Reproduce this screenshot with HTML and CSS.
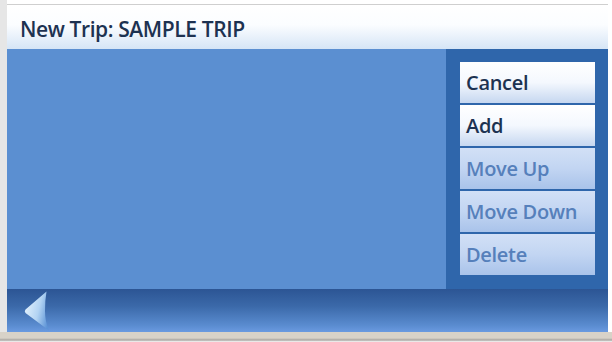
FILE: index.html
```html
<!DOCTYPE html>
<html>
<head>
<meta charset="utf-8">
<link rel="stylesheet" href="styles.css">
</head>
<body>
<div class="page">
  <div class="screen">
    <div class="title">New Trip: SAMPLE TRIP</div>
    <div class="main">
      <div class="list"></div>
      <div class="panel">
        <div class="btn active">Cancel</div>
        <div class="btn active">Add</div>
        <div class="btn disabled">Move Up</div>
        <div class="btn disabled">Move Down</div>
        <div class="btn disabled">Delete</div>
      </div>
    </div>
    <div class="bottombar">
      <svg class="back" width="26" height="40" viewBox="0 0 26 40">
        <defs>
          <linearGradient id="bg1" x1="0" y1="0.3" x2="1" y2="0.7">
            <stop offset="0" stop-color="#e4f2fd"/>
            <stop offset="0.55" stop-color="#b3d4f3"/>
            <stop offset="1" stop-color="#5c93d6"/>
          </linearGradient>
        </defs>
        <path d="M22.5 0.5 L1.5 18.5 Q0 20 1.5 22 L25 39.5 Q21 31 21 20 Q21 9 22.5 0.5 Z" fill="url(#bg1)"/>
      </svg>
    </div>
  </div>
  <div class="footer"></div>
</div>
</body>
</html>
```
FILE: styles.css
```css
html, body {
  margin: 0;
  padding: 0;
  background: #ffffff;
}
.page {
  width: 612px;
  height: 342px;
  display: flex;
  flex-direction: column;
  padding-top: 4px;
  box-sizing: border-box;
  background: linear-gradient(to right, #e6e6e6 0, #e6e6e6 7px, #ffffff 7px);
}
.screen {
  margin-left: 7px;
  width: 601px;
  height: 328px;
  display: flex;
  flex-direction: column;
}
.title {
  height: 45px;
  box-sizing: border-box;
  border-top: 1px solid #cfcfcf;
  background: linear-gradient(to bottom, #ffffff 0%, #fbfdff 45%, #d6e5f6 100%);
  font-family: "Open Sans", sans-serif;
  font-weight: 600;
  font-size: 21px;
  letter-spacing: -0.4px;
  color: #1d3251;
  padding: 5px 0 0 13px;
  line-height: 39px;
}
.main {
  display: flex;
  height: 240px;
}
.list {
  flex: 0 0 439px;
  background: #5b8fd1;
}
.panel {
  flex: 1;
  background: #2f66ab;
  padding: 13px 13px 0 14px;
  display: flex;
  flex-direction: column;
  gap: 2px;
}
.btn {
  height: 41px;
  box-sizing: border-box;
  font-family: "Open Sans", sans-serif;
  font-weight: 600;
  font-size: 20px;
  letter-spacing: -0.3px;
  line-height: 41px;
  padding-left: 6px;
}
.btn.active {
  background: linear-gradient(to bottom, #ffffff 0%, #f4f8fe 50%, #c6d7f0 100%);
  color: #1d3251;
}
.btn.disabled {
  background: linear-gradient(to bottom, #d2e0f6 0%, #c2d5f2 50%, #a9c3ea 100%);
  color: #5680bb;
}
.bottombar {
  height: 43px;
  background: linear-gradient(to bottom, #2c5594 0%, #3b69a9 40%, #5a8cd0 85%, #6a9ae0 100%);
  display: flex;
  align-items: center;
  padding-left: 17px;
}
.back {
  display: block;
}
.footer {
  height: 10px;
  background: linear-gradient(to bottom, #d8d2c8 0, #d8d2c8 6px, #a9a6a2 8px, #ffffff 10px);
}
```
